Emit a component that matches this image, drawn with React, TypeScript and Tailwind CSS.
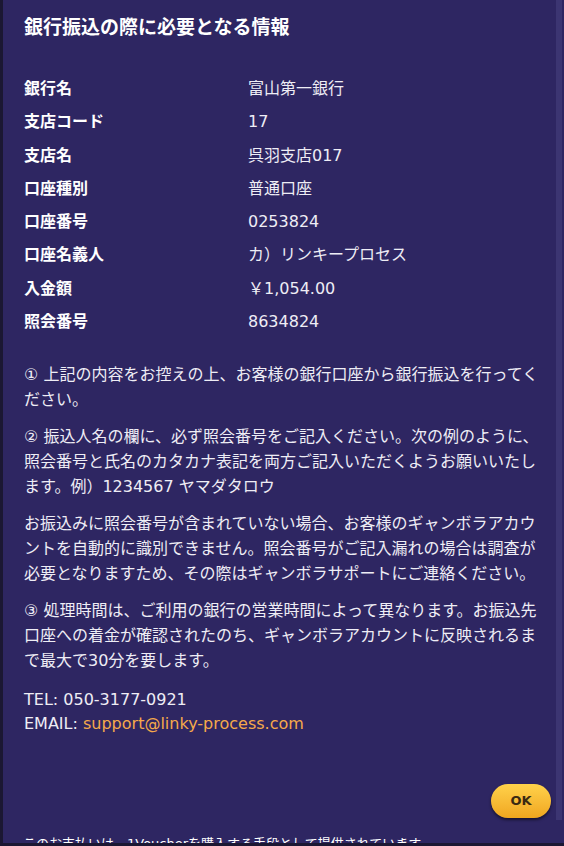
const rows: [string, string][] = [
  ["銀行名", "富山第一銀行"],
  ["支店コード", "17"],
  ["支店名", "呉羽支店017"],
  ["口座種別", "普通口座"],
  ["口座番号", "0253824"],
  ["口座名義人", "カ）リンキープロセス"],
  ["入金額", "￥1,054.00"],
  ["照会番号", "8634824"],
];

export default function App() {
  return (
    <div
      className="w-[564px] h-[846px] overflow-hidden bg-[#2e2662] border-l-[3px] border-b-[3px] border-[#1b1733] text-[#eeedf5] flex flex-col"
      style={{ fontFamily: '"DejaVu Sans", "Noto Sans CJK JP", sans-serif' }}
    >
      <div className="flex h-[830px] shrink-0">
        <div className="w-[553px] flex flex-col pl-[21px] pr-[5px] pt-[15px]">
          <h2 className="text-[19px] leading-[25px] font-bold text-white">銀行振込の際に必要となる情報</h2>

          <div className="mt-[36px] grid grid-cols-[224px_1fr] gap-y-[8.3px] text-[16px] leading-[25px]">
            {rows.map(([k, v]) => (
              <div key={k} className="contents">
                <div className="font-bold text-white">{k}</div>
                <div>{v}</div>
              </div>
            ))}
          </div>

          <div className="mt-[28px] w-[520px] flex flex-col gap-[12px] text-[16px] leading-[25px]">
            <p>① 上記の内容をお控えの上、お客様の銀行口座から銀行振込を行ってください。</p>
            <p>② 振込人名の欄に、必ず照会番号をご記入ください。次の例のように、照会番号と氏名のカタカナ表記を両方ご記入いただくようお願いいたします。例）1234567 ヤマダタロウ</p>
            <p>お振込みに照会番号が含まれていない場合、お客様のギャンボラアカウントを自動的に識別できません。照会番号がご記入漏れの場合は調査が必要となりますため、その際はギャンボラサポートにご連絡ください。</p>
            <p>③ 処理時間は、ご利用の銀行の営業時間によって異なります。お振込先口座への着金が確認されたのち、ギャンボラアカウントに反映されるまで最大で30分を要します。</p>
          </div>

          <div className="mt-[15px] text-[16px] leading-[24px]">
            <p>TEL: 050-3177-0921</p>
            <p>
              EMAIL: <span className="text-[#f5a94a]">support@linky-process.com</span>
            </p>
          </div>

          <div className="mt-auto mb-[12px] flex justify-end">
            <button className="h-[34px] w-[60px] rounded-full bg-gradient-to-b from-[#ffd24a] to-[#f0a61e] text-[#3b2a12] text-[13px] font-bold shadow-[0_2px_3px_rgba(0,0,0,0.5)]">
              OK
            </button>
          </div>
        </div>
        <div className="w-[6px] h-[820px] bg-[#3c3572]" />
      </div>
      <p className="pl-[20px] pt-[5px] text-[13px] leading-[18px] text-white">このお支払いは、1Voucherを購入する手段として提供されています。</p>
    </div>
  );
}
